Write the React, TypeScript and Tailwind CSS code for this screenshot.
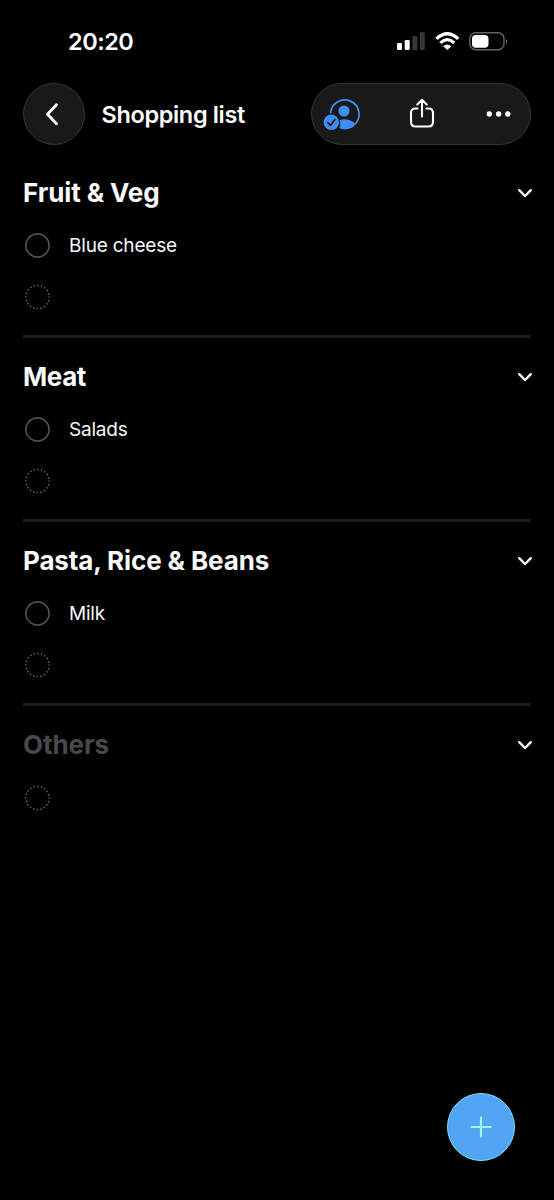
const sections = [
  { title: "Fruit & Veg", items: ["Blue cheese"], titleClass: "text-[#f9f9f9] tracking-[-0.1px]" },
  { title: "Meat", items: ["Salads"], titleClass: "text-[#f9f9f9] tracking-[-0.4px]" },
  { title: "Pasta, Rice & Beans", items: ["Milk"], titleClass: "text-[#f9f9f9] tracking-[-0.12px]" },
  { title: "Others", items: [], titleClass: "text-[#48484a] tracking-[-0.1px]" },
];

function StatusBar() {
  return (
    <div className="flex h-[83px] items-start justify-between pl-[68px] pr-[46px]">
      <span className="mt-[26px] text-[23.5px] leading-8 font-semibold tracking-[-0.5px]">20:20</span>
      <div className="mt-[32px] flex">
        <svg width="28" height="19" viewBox="0 0 28 19" className="mr-[10px]">
          <rect x="0" y="11" width="5" height="7" rx="1.3" fill="#fff" />
          <rect x="7.7" y="8" width="5" height="10" rx="1.3" fill="#fff" />
          <rect x="15.4" y="4" width="5" height="14" rx="1.3" fill="#373737" />
          <rect x="22.8" y="0.3" width="5" height="17.7" rx="1.3" fill="#373737" />
        </svg>
        <svg width="25" height="19" viewBox="0 0 25 19" className="mr-[9px]" fill="none" stroke="#fff">
          <path d="M1.4 6.9Q12.3-3.5 23.2 6.9" strokeWidth="3.3" />
          <path d="M5.3 10.9Q12.3 4.5 19.3 10.9" strokeWidth="3.2" />
          <path d="M12.3 18 8.2 14.2Q12.3 10.9 16.4 14.2Z" fill="#fff" stroke="none" />
        </svg>
        <svg width="39" height="19" viewBox="0 0 39 19" fill="none">
          <rect x="0.8" y="0.8" width="34.2" height="17" rx="5.8" stroke="#656565" strokeWidth="1.4" />
          <rect x="3" y="3" width="16.5" height="12.7" rx="3.7" fill="#fff" />
          <path d="M37 6.4q2.2 2.9 0 5.8Z" fill="#777" />
        </svg>
      </div>
    </div>
  );
}

function Header() {
  return (
    <header className="flex h-[62px] items-center">
      <button className="flex size-[62px] items-center justify-center rounded-full border border-[#343434] bg-[#191919]">
        <svg width="16" height="24" viewBox="0 0 16 24" className="mr-[2px]" fill="none" stroke="#fff" strokeWidth="2.8" strokeLinecap="round" strokeLinejoin="round">
          <path d="M11.5 2.7 2.5 12.2l9 9.5" />
        </svg>
      </button>
      <h1 className="mt-[2px] ml-[16.5px] text-[23.5px] leading-8 font-semibold tracking-[-0.35px] whitespace-nowrap">Shopping list</h1>
      <div className="ml-auto flex h-[62px] w-[220.5px] items-center rounded-full border border-[#343434] bg-[#191919] pr-[18px] pl-[11.5px]">
        <svg width="38" height="34" viewBox="0 0 38 34">
          <path d="M7.5 16.2A14.3 14.3 0 1 1 32.2 27" fill="none" stroke="#3f8cf5" strokeWidth="1.7" />
          <circle cx="21" cy="14" r="5.6" fill="#3f8cf5" />
          <path d="M16.2 31.1Q18.6 27 16.5 23.2Q21.5 21 27.5 23.5Q31.2 25.3 32.8 27.2Q28.6 32.4 21.8 32.4 18.5 32.3 16.2 31.1Z" fill="#3f8cf5" />
          <circle cx="8.3" cy="25.3" r="7.7" fill="#3f8cf5" />
          <path d="m4.9 25.6 2.6 2.8 4.4-5.9" fill="none" stroke="#191919" strokeWidth="1.7" strokeLinecap="round" strokeLinejoin="round" />
        </svg>
        <svg width="26" height="32" viewBox="0 0 26 32" className="ml-[48px]" fill="none" stroke="#fff" strokeWidth="2.1" strokeLinecap="round" strokeLinejoin="round">
          <path d="M8.5 10.5H6.5Q2 10.5 2 15v9q0 4.5 4.5 4.5h13Q24 28.5 24 24v-9Q24 10.5 19.5 10.5h-2M13 18.5V2M8.3 6.4 13 1.8l4.7 4.6" />
        </svg>
        <svg width="26" height="6" viewBox="0 0 26 6" className="ml-auto" fill="#fff">
          <circle cx="3.3" cy="3" r="2.7" />
          <circle cx="12.6" cy="3" r="2.7" />
          <circle cx="21.8" cy="3" r="2.7" />
        </svg>
      </div>
    </header>
  );
}

// 20 dots around the ring
function Placeholder() {
  return (
    <svg width="26" height="26" viewBox="0 0 26 26" fill="none" className="ml-[2px]">
      <circle cx="12.5" cy="13" r="11.7" stroke="#6c6c6f" strokeWidth="1.6" strokeLinecap="round" strokeDasharray="0.01 3.6657" />
    </svg>
  );
}

export default function App() {
  return (
    <div className="relative h-[1200px] w-[554px] overflow-hidden bg-black font-['Inter',sans-serif] text-white">
      <StatusBar />
      <div className="px-[23px]">
        <Header />
        <main className="mt-[22px]">
          {sections.map((section, i) => (
            <section key={section.title}>
              <div className="flex h-[52px] items-center justify-between">
                <h2 className={`text-[26px] leading-8 font-bold ${section.titleClass}`}>{section.title}</h2>
                <svg width="16" height="10" viewBox="0 0 16 10" className="-mr-[2px]" fill="none" stroke="#fff" strokeWidth="2.4" strokeLinecap="round" strokeLinejoin="round">
                  <path d="m2.2 2.2 5.8 5.8 5.8-5.8" />
                </svg>
              </div>
              {section.items.map((item) => (
                <div key={item} className="flex h-[53px] items-center">
                  <svg width="25" height="25" viewBox="0 0 25 25" fill="none" className="ml-[2px]">
                    <circle cx="12.5" cy="12.5" r="11.6" stroke="#505053" strokeWidth="1.7" />
                  </svg>
                  <span className="ml-[19px] text-[19px] leading-6 tracking-[-0.2px] text-[#f9f9f9]">{item}</span>
                </div>
              ))}
              <div className={i < 3 ? "flex h-[50px] items-center" : "flex h-[54px] items-center"}>
                <Placeholder />
              </div>
              {i < 3 && <div className="my-[13px] h-[3px] bg-[#1c1c1e]" />}
            </section>
          ))}
        </main>
      </div>
      <button className="absolute top-[1093px] left-[447px] flex size-[67.5px] items-center justify-center rounded-full border border-[#72e3f8] bg-[#51a5f4]">
        <svg width="22" height="22" viewBox="0 0 22 22" fill="none" stroke="#94fcfb" strokeWidth="2.2" strokeLinecap="round">
          <path d="M11 1.5v19M1.5 11h19" />
        </svg>
      </button>
    </div>
  );
}
